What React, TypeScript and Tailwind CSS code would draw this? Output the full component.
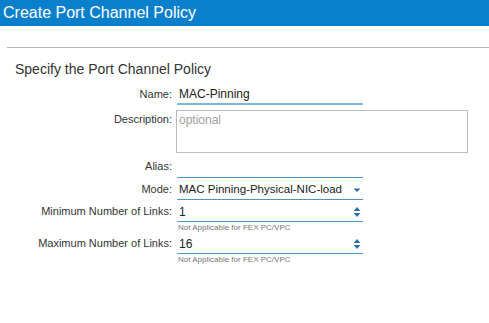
import React from "react";

const font = { fontFamily: '"Liberation Sans", Arial, sans-serif' };

function Caret() {
  return (
    <svg width="8" height="6" viewBox="0 0 8 6" className="shrink-0">
      <path d="M0.5 1.5 L7.5 1.5 L4 5 Z" fill="#2f6fae" />
    </svg>
  );
}

function Spinner() {
  return (
    <svg width="8" height="12" viewBox="0 0 8 12" className="shrink-0">
      <path d="M0.5 5 L7.5 5 L4 1 Z" fill="#2f6fae" />
      <path d="M0.5 7 L7.5 7 L4 11 Z" fill="#2f6fae" />
    </svg>
  );
}

function Label({ children, className = "" }: { children: React.ReactNode; className?: string }) {
  return (
    <div className={`w-[172px] shrink-0 text-right text-[11px] text-[#333] ${className}`}>{children}</div>
  );
}

export default function App() {
  return (
    <div className="w-[489px] h-[323px] bg-white overflow-hidden" style={font}>
      <div className="h-[26px] bg-[#0a80cd] text-white text-[16px] leading-[26px] pl-[3px]">
        Create Port Channel Policy
      </div>
      <div className="mt-[21px] ml-[7px] border-t border-[#b4b4b4]" />
      <div className="mt-[13px] pl-[15px] text-[14px] leading-[16px] text-[#333]">
        Specify the Port Channel Policy
      </div>

      {/* Name */}
      <div className="mt-[7px] flex items-end">
        <Label className="leading-[20px] pb-[1px]">Name:</Label>
        <div className="ml-[5px] w-[186px] h-[21px] border-b-2 border-[#7ab8e0] text-[12px] leading-[18px] text-[#222] pl-[2px] pt-[1px]">
          MAC-Pinning
        </div>
      </div>

      {/* Description */}
      <div className="mt-[5px] flex items-start">
        <Label className="leading-[16px] pt-[1px]">Description:</Label>
        <div className="ml-[4px] w-[292px] h-[43px] border border-[#bdbdbd] text-[12px] leading-[16px] text-[#a0a0a0] pl-[2px] pt-[1px]">
          optional
        </div>
      </div>

      {/* Alias */}
      <div className="mt-[3px] flex items-end">
        <Label className="leading-[20px] pb-[2px]">Alias:</Label>
        <div className="ml-[5px] w-[186px] h-[21px] border-b border-[#4f94c0]" />
      </div>

      {/* Mode */}
      <div className="mt-[1px] flex items-end">
        <Label className="leading-[20px] pb-[1px]">Mode:</Label>
        <div className="ml-[5px] w-[186px] h-[21px] border-b border-[#4f94c0] flex items-center justify-between pl-[2px] pr-[2px] pt-[2px] text-[11.5px] text-[#222]">
          <span>MAC Pinning-Physical-NIC-load</span>
          <Caret />
        </div>
      </div>

      {/* Min */}
      <div className="flex items-end">
        <Label className="leading-[20px] pb-[1px]">Minimum Number of Links:</Label>
        <div className="ml-[5px] w-[186px] h-[22px] border-b border-[#4f94c0] flex items-center justify-between pl-[2px] pr-[2px] pt-[2px] text-[12px] text-[#222]">
          <span>1</span>
          <Spinner />
        </div>
      </div>
      <div className="flex">
        <div className="w-[177px] shrink-0" />
        <div className="text-[8px] leading-[10px] text-[#777] pl-[1px] pt-[1px]">Not Applicable for FEX PC/VPC</div>
      </div>

      {/* Max */}
      <div className="flex items-end">
        <Label className="leading-[20px] pb-[1px]">Maximum Number of Links:</Label>
        <div className="ml-[5px] w-[186px] h-[21px] border-b border-[#4f94c0] flex items-center justify-between pl-[2px] pr-[2px] pt-[2px] text-[12px] text-[#222]">
          <span>16</span>
          <Spinner />
        </div>
      </div>
      <div className="flex">
        <div className="w-[177px] shrink-0" />
        <div className="text-[8px] leading-[10px] text-[#777] pl-[1px] pt-[1px]">Not Applicable for FEX PC/VPC</div>
      </div>
    </div>
  );
}
